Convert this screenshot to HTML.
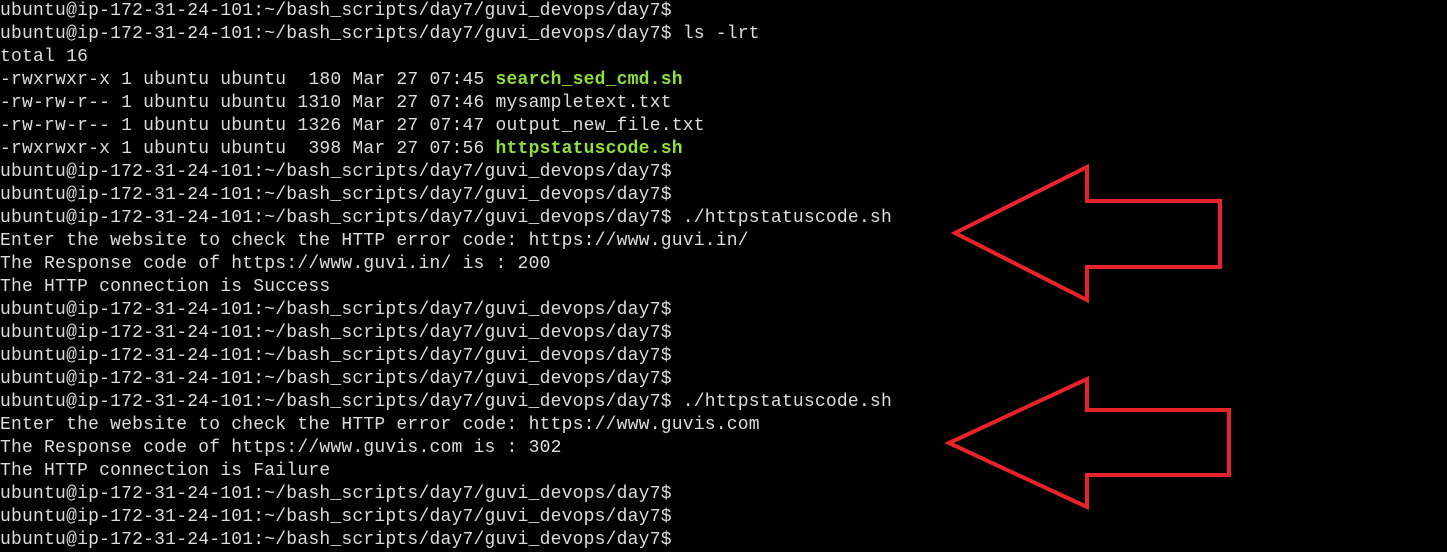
<!DOCTYPE html>
<html><head><meta charset="utf-8"><style>
html,body{margin:0;padding:0;background:#000;width:1447px;height:551px;overflow:hidden}
pre{margin:0;position:absolute;left:0;top:0px;font-family:"Liberation Mono",monospace;font-size:18px;letter-spacing:0.21px;line-height:23px;color:#dcdcdc;white-space:pre}
b{color:#8ee03a;font-weight:bold}
svg{position:absolute;left:0;top:0}
</style></head><body>
<pre>ubuntu@ip-172-31-24-101:~/bash_scripts/day7/guvi_devops/day7$
ubuntu@ip-172-31-24-101:~/bash_scripts/day7/guvi_devops/day7$ ls -lrt
total 16
-rwxrwxr-x 1 ubuntu ubuntu  180 Mar 27 07:45 <b>search_sed_cmd.sh</b>
-rw-rw-r-- 1 ubuntu ubuntu 1310 Mar 27 07:46 mysampletext.txt
-rw-rw-r-- 1 ubuntu ubuntu 1326 Mar 27 07:47 output_new_file.txt
-rwxrwxr-x 1 ubuntu ubuntu  398 Mar 27 07:56 <b>httpstatuscode.sh</b>
ubuntu@ip-172-31-24-101:~/bash_scripts/day7/guvi_devops/day7$
ubuntu@ip-172-31-24-101:~/bash_scripts/day7/guvi_devops/day7$
ubuntu@ip-172-31-24-101:~/bash_scripts/day7/guvi_devops/day7$ ./httpstatuscode.sh
Enter the website to check the HTTP error code: https://www.guvi.in/
The Response code of https://www.guvi.in/ is : 200
The HTTP connection is Success
ubuntu@ip-172-31-24-101:~/bash_scripts/day7/guvi_devops/day7$
ubuntu@ip-172-31-24-101:~/bash_scripts/day7/guvi_devops/day7$
ubuntu@ip-172-31-24-101:~/bash_scripts/day7/guvi_devops/day7$
ubuntu@ip-172-31-24-101:~/bash_scripts/day7/guvi_devops/day7$
ubuntu@ip-172-31-24-101:~/bash_scripts/day7/guvi_devops/day7$ ./httpstatuscode.sh
Enter the website to check the HTTP error code: https://www.guvis.com
The Response code of https://www.guvis.com is : 302
The HTTP connection is Failure
ubuntu@ip-172-31-24-101:~/bash_scripts/day7/guvi_devops/day7$
ubuntu@ip-172-31-24-101:~/bash_scripts/day7/guvi_devops/day7$
ubuntu@ip-172-31-24-101:~/bash_scripts/day7/guvi_devops/day7$</pre>
<svg width="1447" height="551">
<polygon points="955,233 1087,167 1087,201 1220,201 1220,267 1087,267 1087,300" fill="none" stroke="#e8232a" stroke-width="4"/>
<polygon points="949,443 1087,379 1087,410 1229,410 1229,475 1087,475 1087,507" fill="none" stroke="#e8232a" stroke-width="4"/>
</svg>
</body></html>
